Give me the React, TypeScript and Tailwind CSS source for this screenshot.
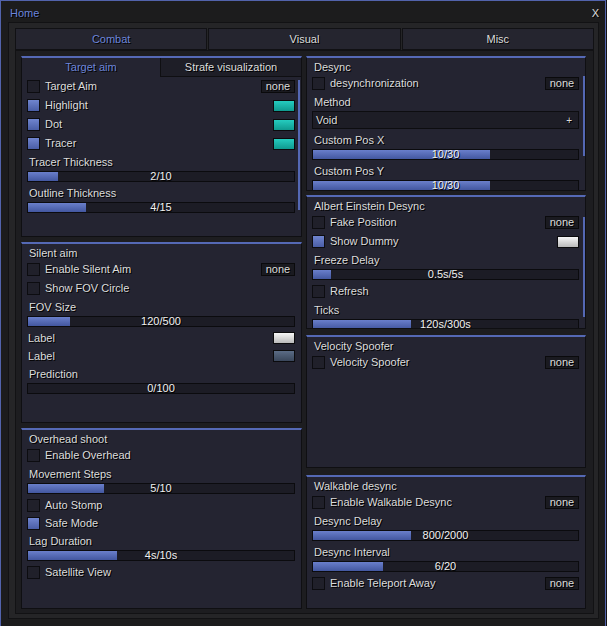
import type { ReactNode } from "react"

// Menu "Home" : onglet Combat ouvert, deux colonnes de groupes.

type Row =
  | { t: "title"; text: string }
  | { t: "check"; text: string; on?: boolean; bind?: boolean; swatch?: string; tight?: boolean }
  | { t: "label"; text: string; swatch?: string }
  | { t: "slider"; value: string; fill: number }
  | { t: "select"; value: string }

type Group = {
  id: string
  h: string
  rows: Row[]
  scroll?: string
  subtabs?: boolean
}

const SWATCH: Record<string, string> = {
  teal: "bg-linear-to-b from-[#25ccbf] to-[#0f9a8f]",
  white: "bg-linear-to-b from-[#f7f7f7] to-[#bababa]",
  slate: "bg-linear-to-b from-[#5b6c86] to-[#3a475b]",
}

const LEFT: Group[] = [
  {
    id: "target",
    h: "h-[181px]",
    subtabs: true,
    scroll: "top-[22px] h-[130px] right-[1px]",
    rows: [
      { t: "check", text: "Target Aim", bind: true },
      { t: "check", text: "Highlight", on: true, swatch: "teal" },
      { t: "check", text: "Dot", on: true, swatch: "teal" },
      { t: "check", text: "Tracer", on: true, swatch: "teal" },
      { t: "label", text: "Tracer Thickness" },
      { t: "slider", value: "2/10", fill: 30 },
      { t: "label", text: "Outline Thickness" },
      { t: "slider", value: "4/15", fill: 58 },
    ],
  },
  {
    id: "silent",
    h: "h-[181px]",
    rows: [
      { t: "title", text: "Silent aim" },
      { t: "check", text: "Enable Silent Aim", bind: true },
      { t: "check", text: "Show FOV Circle" },
      { t: "label", text: "FOV Size" },
      { t: "slider", value: "120/500", fill: 42 },
      { t: "label", text: "Label", swatch: "white" },
      { t: "label", text: "Label", swatch: "slate" },
      { t: "label", text: "Prediction" },
      { t: "slider", value: "0/100", fill: 0 },
    ],
  },
  {
    id: "overhead",
    h: "h-[181px]",
    rows: [
      { t: "title", text: "Overhead shoot" },
      { t: "check", text: "Enable Overhead" },
      { t: "label", text: "Movement Steps" },
      { t: "slider", value: "5/10", fill: 76 },
      { t: "check", text: "Auto Stomp", tight: true },
      { t: "check", text: "Safe Mode", on: true, tight: true },
      { t: "label", text: "Lag Duration" },
      { t: "slider", value: "4s/10s", fill: 89 },
      { t: "check", text: "Satellite View" },
    ],
  },
]

const RIGHT: Group[] = [
  {
    id: "desync",
    h: "h-[135px]",
    scroll: "top-[18px] h-[80px] right-[0px]",
    rows: [
      { t: "title", text: "Desync" },
      { t: "check", text: "desynchronization", bind: true },
      { t: "label", text: "Method" },
      { t: "select", value: "Void" },
      { t: "label", text: "Custom Pos X" },
      { t: "slider", value: "10/30", fill: 177 },
      { t: "label", text: "Custom Pos Y" },
      { t: "slider", value: "10/30", fill: 177 },
    ],
  },
  {
    id: "einstein",
    h: "h-[134px] mt-[4px]",
    scroll: "top-[20px] h-[100px] right-[0px]",
    rows: [
      { t: "title", text: "Albert Einstein Desync" },
      { t: "check", text: "Fake Position", bind: true },
      { t: "check", text: "Show Dummy", on: true, swatch: "white" },
      { t: "label", text: "Freeze Delay" },
      { t: "slider", value: "0.5s/5s", fill: 18 },
      { t: "check", text: "Refresh" },
      { t: "label", text: "Ticks" },
      { t: "slider", value: "120s/300s", fill: 98 },
    ],
  },
  {
    id: "velocity",
    h: "h-[133px] mt-[6px]",
    rows: [
      { t: "title", text: "Velocity Spoofer" },
      { t: "check", text: "Velocity Spoofer", bind: true },
    ],
  },
  {
    id: "walkable",
    h: "h-[134px] mt-[7px]",
    rows: [
      { t: "title", text: "Walkable desync" },
      { t: "check", text: "Enable Walkable Desync", bind: true },
      { t: "label", text: "Desync Delay" },
      { t: "slider", value: "800/2000", fill: 98 },
      { t: "label", text: "Desync Interval" },
      { t: "slider", value: "6/20", fill: 70 },
      { t: "check", text: "Enable Teleport Away", bind: true },
    ],
  },
]

function Swatch({ color }: { color: string }) {
  return <div className={`w-[22px] h-[12px] border border-[#0b0b0d] ${SWATCH[color]}`} />
}

function Bind() {
  return (
    <div className="w-[34px] h-[13px] border border-[#0a0a0c] bg-[#1a1a20] flex items-center justify-center leading-[11px]">
      none
    </div>
  )
}

function renderRow(r: Row, i: number): ReactNode {
  switch (r.t) {
    case "title":
      return <div key={i} className="h-[16px] pt-[3px] pl-[7px] leading-[13px]">{r.text}</div>
    case "check":
      return (
        <div key={i} className={`${r.tight ? "h-[18px]" : "h-[19px]"} flex items-center pl-[5px] pr-[6px]`}>
          <div
            className={`w-[13px] h-[13px] border border-[#0c0c10] ${
              r.on ? "bg-linear-to-b from-[#7085cf] to-[#4a5ea6]" : "bg-[#20202a]"
            }`}
          />
          <span className="ml-[5px] flex-1 leading-[13px]">{r.text}</span>
          {r.bind && <Bind />}
          {r.swatch && <Swatch color={r.swatch} />}
        </div>
      )
    case "label":
      return r.swatch ? (
        <div key={i} className="h-[18px] flex items-center justify-between pl-[6px] pr-[6px]">
          <span className="leading-[13px]">{r.text}</span>
          <Swatch color={r.swatch} />
        </div>
      ) : (
        <div key={i} className="h-[18px] leading-[18px] pl-[7px]">{r.text}</div>
      )
    case "slider":
      return (
        <div key={i} className="pl-[5px] pr-[6px] pb-[2px]">
          <div className="relative h-[11px] border border-[#0b0b0e] bg-[#1c1c25]">
            <div
              className="absolute left-0 top-0 bottom-0 bg-linear-to-b from-[#6a7fcb] to-[#4357a0]"
              style={{ width: r.fill }}
            />
            <div className="absolute inset-0 flex items-center justify-center leading-[9px] text-[#f0f0f0]">
              {r.value}
            </div>
          </div>
        </div>
      )
    case "select":
      return (
        <div key={i} className="pl-[5px] pr-[6px] pb-[2px]">
          <div className="h-[18px] border border-[#0d0d10] bg-[#1d1d26] flex items-center justify-between pl-[3px] pr-[6px]">
            <span>{r.value}</span>
            <span className="text-[10px]">+</span>
          </div>
        </div>
      )
  }
}

function Panel({ g }: { g: Group }) {
  return (
    <div
      className={`relative overflow-hidden border border-[#0f0f12] border-t-2 border-t-[#5569b5] bg-[#242431] ${g.h}`}
    >
      {g.subtabs && (
        <div className="flex h-[19px]">
          <div className="w-[138px] flex items-center justify-center text-[#6d86da]">Target aim</div>
          <div className="flex-1 flex items-center justify-center bg-[#1e1e27] border-l border-b border-[#0f0f12]">
            Strafe visualization
          </div>
        </div>
      )}
      {g.rows.map(renderRow)}
      {g.scroll && <div className={`absolute w-[2px] bg-[#5468b4] ${g.scroll}`} />}
    </div>
  )
}

export default function App() {
  const tabs = ["Combat", "Visual", "Misc"]
  return (
    <div className="w-[607px] h-[626px] bg-[#141416]">
      <div className="w-[606px] h-[626px] bg-[#1c1c1d] border-x border-t border-[#5263ac] text-[11px] text-[#dcdcdc] font-['Liberation_Sans',Arial,sans-serif] [text-shadow:1px_1px_0_#000]">
        <div className="h-[21px] pt-[6px] pl-[9px] pr-[6px] flex justify-between leading-[13px]">
          <span className="text-[#6b84dc]">Home</span>
          <span>X</span>
        </div>

        <div className="ml-[7px] w-[591px] h-[597px] border border-[#121214] bg-[#252527] pl-[6px] pr-[4px] pt-[5px]">
          <div className="grid grid-cols-3 gap-[1px] h-[22px]">
            {tabs.map((t, i) => (
              <div
                key={t}
                className={`flex items-center justify-center border border-[#111114] bg-[#25252f] ${
                  i === 0 ? "text-[#6d86da]" : ""
                }`}
              >
                {t}
              </div>
            ))}
          </div>

          <div className="h-[564px] border border-[#121214] bg-[#1d1d20] pl-[5px] pr-[6px] pt-[5px] flex gap-[4px]">
            <div className="w-[281px] flex flex-col gap-[5px]">
              {LEFT.map((g) => (
                <Panel key={g.id} g={g} />
              ))}
            </div>
            <div className="w-[280px] flex flex-col">
              {RIGHT.map((g) => (
                <Panel key={g.id} g={g} />
              ))}
            </div>
          </div>
        </div>
      </div>
    </div>
  )
}
